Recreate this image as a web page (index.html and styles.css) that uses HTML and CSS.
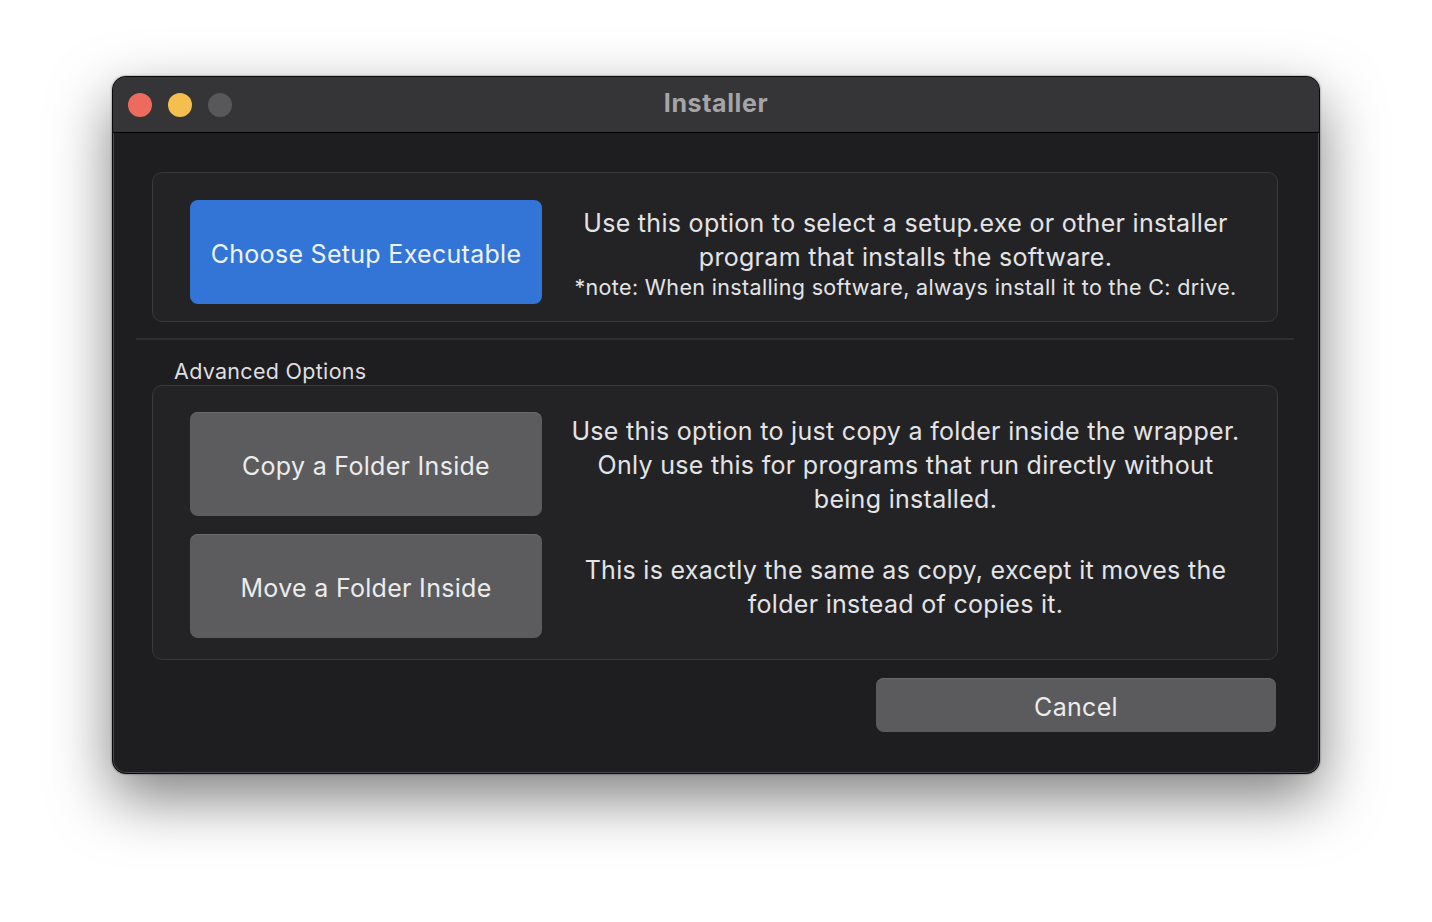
FILE: index.html
```html
<!DOCTYPE html>
<html>
<head>
<meta charset="utf-8">
<link rel="stylesheet" href="styles.css">
</head>
<body>
<div class="window">
  <div class="titlebar">
    <div class="lights">
      <span class="light red"></span>
      <span class="light yellow"></span>
      <span class="light gray"></span>
    </div>
    <div class="title">Installer</div>
  </div>
  <div class="content">
    <div class="box box-top">
      <div class="row">
        <div class="btn btn-blue">Choose Setup Executable</div>
        <div class="desc">
          <div class="line">Use this option to select a setup.exe or other installer</div>
          <div class="line">program that installs the software.</div>
          <div class="note">*note: When installing software, always install it to the C: drive.</div>
        </div>
      </div>
    </div>
    <div class="separator"></div>
    <div class="label">Advanced Options</div>
    <div class="box box-adv">
      <div class="row">
        <div class="btn btn-gray">Copy a Folder Inside</div>
        <div class="desc">
          <div class="line">Use this option to just copy a folder inside the wrapper.</div>
          <div class="line">Only use this for programs that run directly without</div>
          <div class="line">being installed.</div>
        </div>
      </div>
      <div class="row row-second">
        <div class="btn btn-gray">Move a Folder Inside</div>
        <div class="desc">
          <div class="line">This is exactly the same as copy, except it moves the</div>
          <div class="line">folder instead of copies it.</div>
        </div>
      </div>
    </div>
    <div class="footer">
      <div class="btn btn-cancel">Cancel</div>
    </div>
  </div>
</div>
</body>
</html>
```
FILE: styles.css
```css
html, body {
  margin: 0;
  padding: 0;
  background: #ffffff;
  width: 1432px;
  height: 922px;
  overflow: hidden;
}
body {
  font-family: Inter, "Liberation Sans", sans-serif;
  padding-top: 76px;
  box-sizing: border-box;
}
.window {
  margin-left: 112px;
  width: 1208px;
  height: 698px;
  box-sizing: border-box;
  background: #1e1e21;
  border: 1px solid #0a0a0b;
  border-radius: 14px;
  overflow: hidden;
  box-shadow: 0 24px 60px rgba(0,0,0,0.5), 0 0 2px rgba(0,0,0,0.6), inset 0 0 0 1px #4a4a4d;
}
.titlebar {
  height: 56px;
  background: #353538;
  border-bottom: 1px solid #000;
  box-sizing: border-box;
  display: flex;
  align-items: center;
  position: relative;
}
.lights {
  display: flex;
  gap: 16px;
  padding-left: 15px;
}
.light {
  width: 24px;
  height: 24px;
  border-radius: 50%;
  display: block;
}
.red { background: #ec6a5e; }
.yellow { background: #f4bf4f; }
.gray { background: #58585b; }
.title {
  position: absolute;
  left: 0;
  right: 0;
  top: 0;
  line-height: 53px;
  text-align: center;
  font-weight: 700;
  font-size: 25px;
  letter-spacing: 0.6px;
  color: #a5a5a8;
  pointer-events: none;
}
.content {
  padding: 39px 41px 0 39px;
}
.box {
  background: #232326;
  border: 1px solid #39393c;
  border-radius: 10px;
  box-sizing: border-box;
}
.box-top {
  height: 150px;
  padding: 27px 0 0 37px;
}
.row {
  display: flex;
  align-items: center;
}
.row-second {
  margin-top: 18px;
}
.btn {
  border-radius: 8px;
  display: flex;
  align-items: center;
  justify-content: center;
  font-size: 25px;
  letter-spacing: 0.3px;
  color: #ececec;
  box-sizing: border-box;
  flex: none;
  padding-top: 4px;
}
.btn-blue {
  width: 352px;
  height: 104px;
  background: #3375d6;
  color: #eef3fb;
}
.btn-gray {
  width: 352px;
  height: 104px;
  background: #5c5c5f;
  box-shadow: inset 0 1px 0 #6a6a6d;
}
.desc {
  flex: 1;
  text-align: center;
  color: #e4e4e6;
  font-size: 25px;
  letter-spacing: 0.3px;
  padding-right: 26px;
  padding-top: 2px;
  margin-left: 18px;
}
.line {
  line-height: 34px;
}
.note {
  font-size: 21.5px;
  letter-spacing: 0.35px;
  line-height: 26px;
}
.separator {
  height: 2px;
  background: #2f2f32;
  margin: 16px -16px 0 -16px;
}
.label {
  font-size: 21.5px;
  letter-spacing: 0.3px;
  color: #dedee0;
  padding-left: 22px;
  margin-top: 18px;
  line-height: 26px;
}
.box-adv {
  margin-top: 1px;
  height: 275px;
  padding: 26px 0 0 37px;
}
.footer {
  display: flex;
  justify-content: flex-end;
  margin-top: 18px;
  padding-right: 2px;
}
.btn-cancel {
  width: 400px;
  height: 54px;
  background: #5b5b5e;
  box-shadow: inset 0 1px 0 #6a6a6d;
}
```
